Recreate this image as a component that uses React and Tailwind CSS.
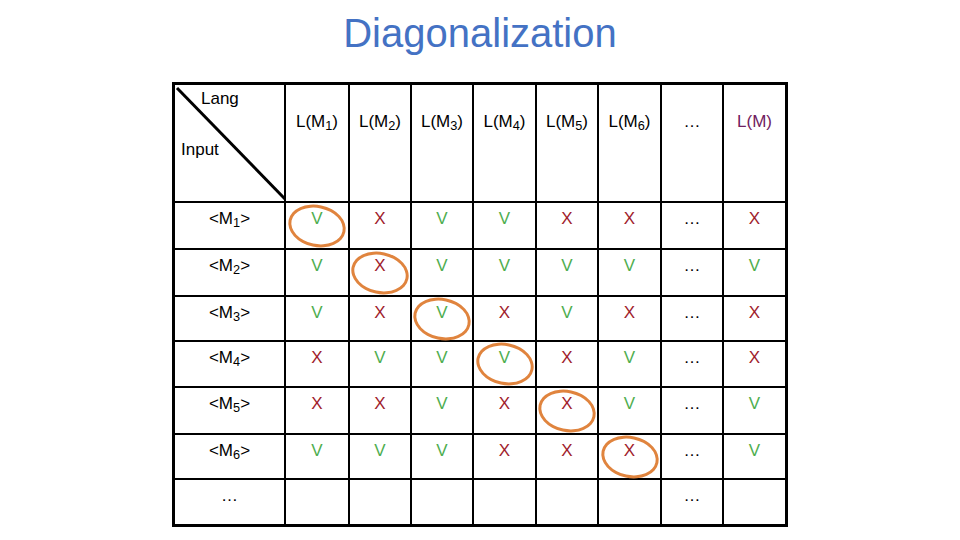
const rows = [
	{ m: "1", cells: ["V", "X", "V", "V", "X", "X"], last: "X" },
	{ m: "2", cells: ["V", "X", "V", "V", "V", "V"], last: "V" },
	{ m: "3", cells: ["V", "X", "V", "X", "V", "X"], last: "X" },
	{ m: "4", cells: ["X", "V", "V", "V", "X", "V"], last: "X" },
	{ m: "5", cells: ["X", "X", "V", "X", "X", "V"], last: "V" },
	{ m: "6", cells: ["V", "V", "V", "X", "X", "X"], last: "V" },
];

function Mark({ v }) {
	return (
		<span className={v === "V" ? "text-[#4fae4f]" : "text-[#a01c2c]"}>
			{v}
		</span>
	);
}

function Cell({ children, circled }) {
	return (
		<div className="relative bg-white flex justify-center pt-[6px] leading-5">
			{children}
			{circled && (
				<span className="absolute left-1/2 top-1/2 -translate-x-1/2 -translate-y-1/2 rotate-[12deg] w-[58px] h-[42px] rounded-[50%] border-[3px] border-[#e0843e] z-10" />
			)}
		</div>
	);
}

export default function App() {
	return (
		<div className="w-[960px] h-[540px] bg-white font-['Liberation_Sans',Arial,sans-serif] text-[17px] text-black">
			<h1 className="pt-[13px] text-center text-[40px] leading-[40px] text-[#4472c4]">
				Diagonalization
			</h1>

			<div className="mt-[29px] mx-auto w-fit grid grid-cols-[109px_62px_60px_60px_61px_60px_61px_60px_61px] grid-rows-[116px_45px_45px_43px_44px_45px_43px_44px] gap-[2px] bg-black border-[3px] border-black">
				{/* corner cell */}
				<div className="relative bg-white flex flex-col leading-5">
					<span className="pl-[26px] pt-[4px]">Lang</span>
					<span className="pl-[6px] mt-[31px]">Input</span>
					<svg
						className="absolute inset-0 overflow-visible"
						width="109"
						height="116"
					>
						<line
							x1="2"
							y1="3"
							x2="110"
							y2="114"
							stroke="black"
							strokeWidth="3"
						/>
					</svg>
				</div>

				{["1", "2", "3", "4", "5", "6"].map((n) => (
					<div
						key={n}
						className="bg-white flex justify-center pt-[27px] leading-5"
					>
						<span>
							L(M<sub>{n}</sub>)
						</span>
					</div>
				))}
				<div className="bg-white flex justify-center pt-[27px] leading-5">
					…
				</div>
				<div className="bg-white flex justify-center pt-[27px] leading-5 text-[#702060]">
					L(M)
				</div>

				{rows.map((r, i) => (
					<div key={r.m} className="contents">
						<Cell>
							<span>
								&lt;M<sub>{r.m}</sub>&gt;
							</span>
						</Cell>
						{r.cells.map((c, j) => (
							<Cell key={j} circled={i === j}>
								<Mark v={c} />
							</Cell>
						))}
						<Cell>…</Cell>
						<Cell>
							<Mark v={r.last} />
						</Cell>
					</div>
				))}

				<Cell>…</Cell>
				<Cell />
				<Cell />
				<Cell />
				<Cell />
				<Cell />
				<Cell />
				<Cell>…</Cell>
				<Cell />
			</div>
		</div>
	);
}
